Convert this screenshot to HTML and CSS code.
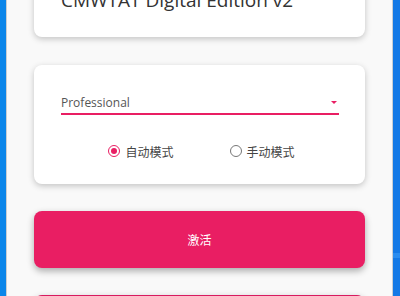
FILE: index.html
```html
<!DOCTYPE html>
<html lang="zh">
<head>
<meta charset="utf-8">
<link rel="stylesheet" href="styles.css">
</head>
<body>
<div class="desk">
  <div class="edge edge-left"></div>
  <main class="main">
    <section class="card card-title">
      <h1 class="title">CMWTAT Digital Edition v2</h1>
    </section>
    <section class="card card-options">
      <div class="select">
        <span class="select-value">Professional</span>
        <span class="select-arrow"></span>
      </div>
      <div class="radios">
        <label class="radio radio-on"><span class="dot"></span><span class="radio-text">自动模式</span></label>
        <label class="radio"><span class="dot"></span><span class="radio-text">手动模式</span></label>
      </div>
    </section>
    <button class="btn">激活</button>
    <div class="btn btn-next"></div>
  </main>
  <div class="edge edge-right"><div class="band"></div></div>
</div>
</body>
</html>
```
FILE: styles.css
```css
html, body {
  margin: 0;
  padding: 0;
  width: 400px;
  height: 296px;
  overflow: hidden;
}
body {
  font-family: "Open Sans", "Noto Sans CJK SC", sans-serif;
}
.desk {
  display: flex;
  height: 296px;
}
.edge {
  flex: 0 0 auto;
}
.edge-left {
  width: 6px;
  background: #0b86ea;
  border-right: 1px solid #c9ced3;
}
.edge-right {
  width: 7px;
  background: #1479e6;
  border-left: 1px solid #c9ced3;
  display: flex;
  flex-direction: column;
  padding-top: 253px;
}
.band {
  height: 5px;
  background: #2a8df0;
}
.main {
  flex: 1;
  background: #f9f9f9;
  padding: 0 27px;
  display: flex;
  flex-direction: column;
  gap: 27px;
}
.card {
  background: #fff;
  border-radius: 8px;
  box-shadow: 0 2px 6px rgba(0, 0, 0, 0.22);
}
.card-title {
  margin-top: -30px;
  margin-bottom: 1px;
  padding: 16px 27px 23px;
}
.title {
  margin: 0;
  font-weight: 400;
  font-size: 19px;
  line-height: 28px;
  color: #333;
}
.card-options {
  padding: 28px 26px 25px 27px;
  display: flex;
  flex-direction: column;
  gap: 28px;
}
.select {
  height: 20px;
  border-bottom: 2px solid #e91e63;
  display: flex;
  align-items: center;
  justify-content: space-between;
  padding-right: 2px;
}
.select-value {
  font-size: 12px;
  color: #555;
  line-height: 20px;
}
.select-arrow {
  width: 0;
  height: 0;
  border-left: 3px solid transparent;
  border-right: 3px solid transparent;
  border-top: 3.5px solid #e91e63;
  margin-top: -2px;
}
.radios {
  display: flex;
  justify-content: center;
  gap: 56px;
  height: 16px;
  padding-left: 3px;
}
.radio {
  display: flex;
  align-items: center;
  gap: 5px;
  font-family: "Noto Sans CJK SC", sans-serif;
  font-size: 12px;
  color: #444;
}
.dot {
  width: 10px;
  height: 10px;
  border: 1.5px solid #777;
  border-radius: 50%;
  box-sizing: content-box;
  position: relative;
}
.radio-on .dot {
  border-color: #e91e63;
}
.radio-on .dot::after {
  content: "";
  position: absolute;
  left: 2px;
  top: 2px;
  width: 6px;
  height: 6px;
  border-radius: 50%;
  background: #e91e63;
}
.btn {
  flex: 0 0 57px;
  border: none;
  border-radius: 8px;
  background: #e91e63;
  color: #fff;
  font-family: "Noto Sans CJK SC", sans-serif;
  font-size: 12px;
  box-shadow: 0 3px 7px rgba(0, 0, 0, 0.32);
  padding: 0;
  margin: 0;
}
.btn-next {
  background: #d81b60;
}
```
